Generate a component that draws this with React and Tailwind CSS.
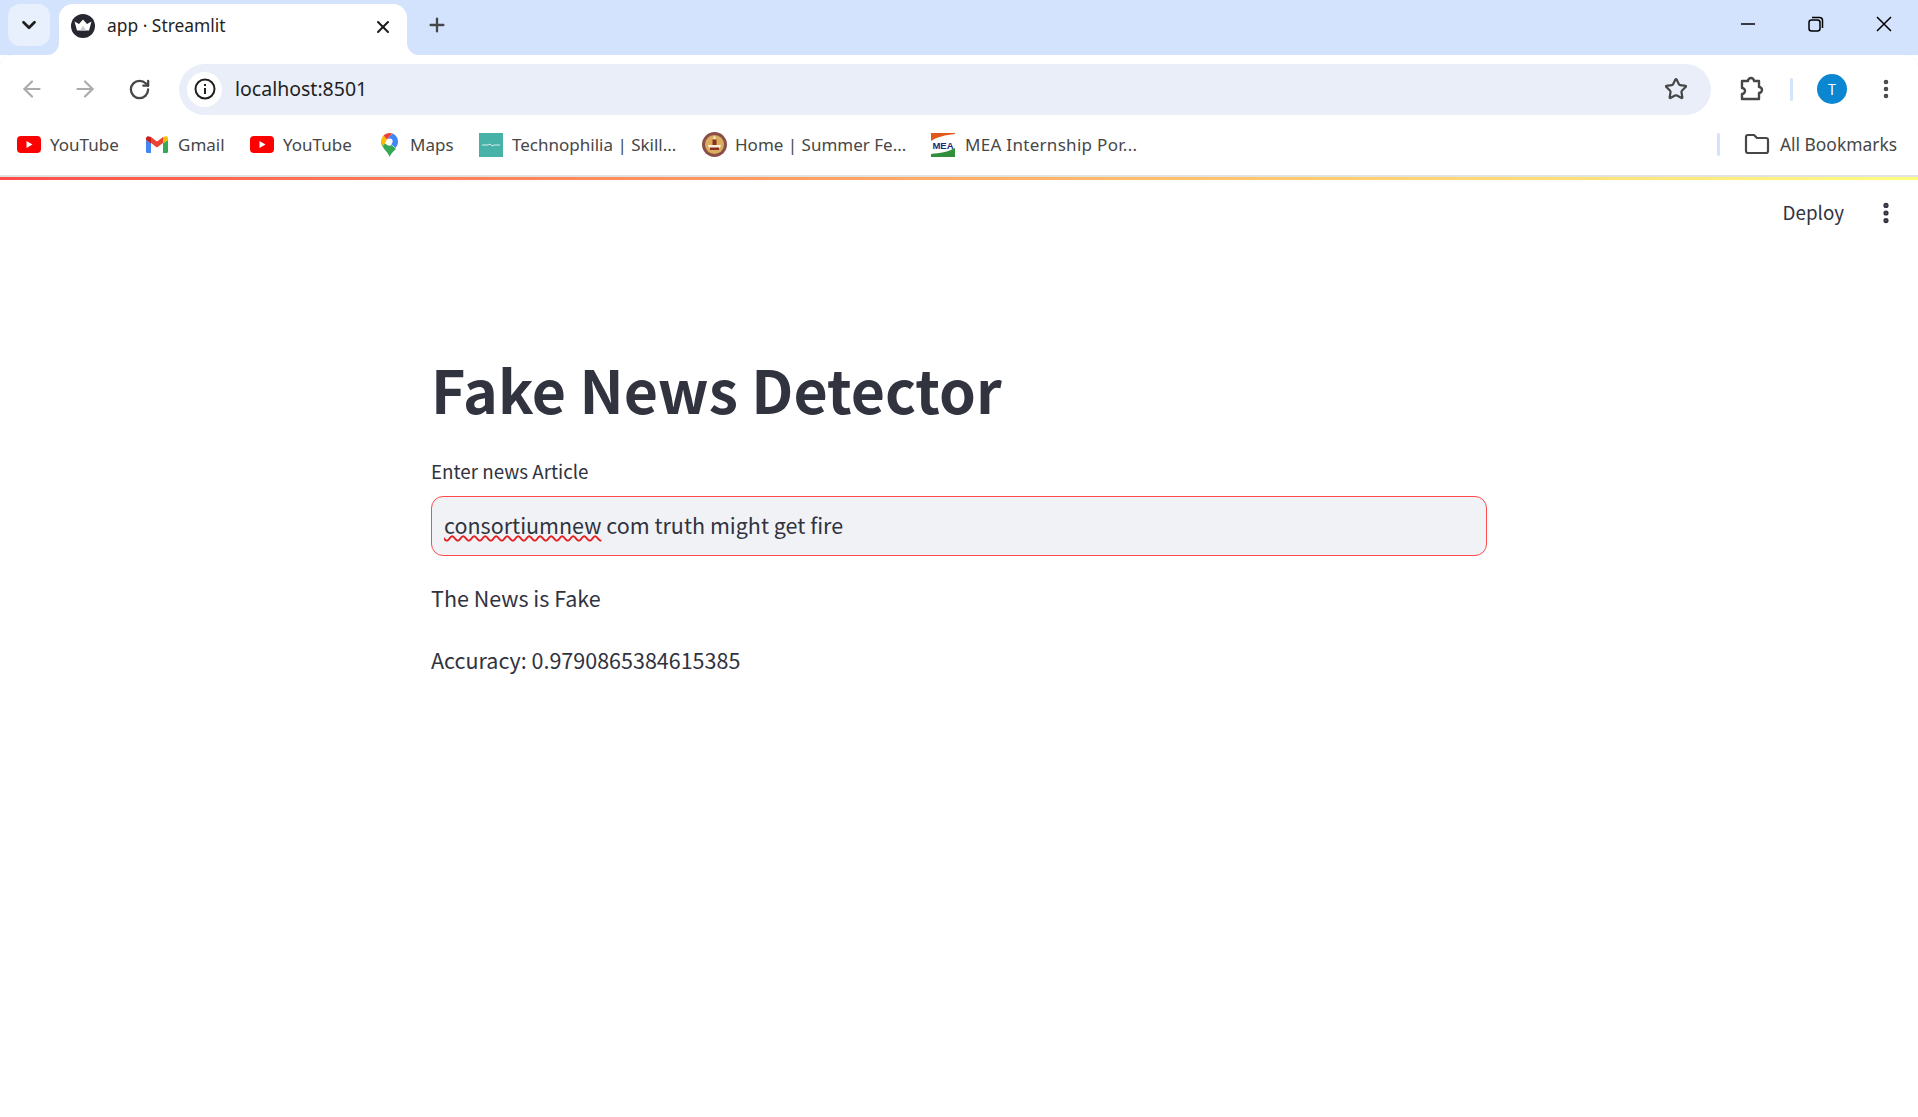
import React from 'react';
import { X, Plus, ChevronDown, ArrowLeft, ArrowRight, RotateCw, Star, EllipsisVertical } from 'lucide-react';

const YouTubeIcon = () => (
  <svg width="24" height="17" viewBox="0 0 24 17" className="shrink-0">
    <rect width="24" height="17" rx="4" fill="#ff0000" />
    <path d="M9.5 5v7l6-3.5z" fill="#fff" />
  </svg>
);

const GmailIcon = () => (
  <svg width="22" height="17" viewBox="0 0 22 17" className="shrink-0">
    <path d="M0 4v11.5A1.5 1.5 0 0 0 1.5 17H5V7z" fill="#4285f4" />
    <path d="M22 4v11.5a1.500 1.500 0 0 1-1.500 1.500H17V7z" fill="#34a853" />
    <path d="M5 7 11 11.500 17 7V1l-6 4.500L5 1z" fill="#ea4335" />
    <path d="M0 4 5 7.500V1L3 .5C1.500-.4 0 .8 0 2.500z" fill="#c5221f" />
    <path d="M22 4 17 7.500V1l2-.5C20.500-.4 22 .8 22 2.500z" fill="#fbbc04" />
  </svg>
);

const MapsIcon = () => (
  <svg width="17" height="24" viewBox="0 0 17 24" className="shrink-0">
    <path d="M8.500 24C7.500 19 0 14.500 0 8.500L5 11c1.500 2 4 2 5.500 1L15 16c-3 3-5.500 5-6.500 8z" fill="#34a853" />
    <path d="M0 8.500C0 6 1 4 2.500 2.500L6 6.500 2.500 13C1 11.500 0 10 0 8.500z" fill="#fbbc04" />
    <path d="M2.500 2.500C4 1 6 0 8.500 0c1 0 2 .2 3 .6L6 6.500z" fill="#ea4335" />
    <path d="M11.500.6C14.500 1.800 17 4.800 17 8.500c0 2.500-1 4.500-2.500 6.500L10 11c1.500-2 1.500-3.500 1-5L6 6.500z" fill="#4285f4" />
    <circle cx="8.500" cy="8.500" r="3" fill="#fff" />
  </svg>
);

const TechnophiliaIcon = () => (
  <svg width="24" height="24" viewBox="0 0 24 24" className="shrink-0">
    <rect width="24" height="24" fill="#48b2a9" />
    <path d="M3 12h6l2-1 2 2 2-1h6" stroke="#d6efec" strokeWidth="1" fill="none" />
  </svg>
);

const SummerIcon = () => (
  <svg width="25" height="25" viewBox="0 0 25 25" className="shrink-0">
    <circle cx="12.500" cy="12.500" r="12.500" fill="#8a4f48" />
    <circle cx="12.500" cy="12.500" r="9.500" fill="#d9ae5f" />
    <path d="M11.500 4.500h2v3h-2z" fill="#f7efd8" />
    <path d="M10.500 7.500h4V13h-4z" fill="#8c2f25" />
    <path d="M6 13h13c-.8 3.500-3.500 5-6.500 5S6.800 16.500 6 13z" fill="#f7efd8" />
    <path d="M8 15.500h9V18H8z" fill="#8c2f25" />
  </svg>
);

const MeaIcon = () => (
  <svg width="24" height="24" viewBox="0 0 24 24" className="shrink-0">
    <path d="M0 0h24v24H0z" fill="#fff" />
    <path d="M0 8V0h24v1C14 2 6 4 0 8z" fill="#e2571a" />
    <path d="M0 24v-3c9-1 17-2 24-6v9z" fill="#2f8f3b" />
    <text x="12" y="15.500" textAnchor="middle" fontSize="9.500" fontWeight="700" fontFamily="'Liberation Sans', sans-serif" fill="#1b2a78">MEA</text>
  </svg>
);

const StreamlitFavicon = () => (
  <svg width="24" height="24" viewBox="0 0 24 24" className="shrink-0">
    <circle cx="12" cy="12" r="12" fill="#262730" />
    <path d="M3.500 7.500l4.500 2.500L12 5.500l4 4.500 4.500-2.500L18 16.500H6z" fill="#fff" />
    <path d="M9 16.500l3-5 3 5z" fill="#c9cad0" />
  </svg>
);

const bookmarks = [
  { label: 'YouTube', icon: <YouTubeIcon />, width: 'w-[129px]', gap: 'gap-[9px]' },
  { label: 'Gmail', icon: <GmailIcon />, width: 'w-[104px]', gap: 'gap-[10px]' },
  { label: 'YouTube', icon: <YouTubeIcon />, width: 'w-[131px]', gap: 'gap-[9px]' },
  { label: 'Maps', icon: <MapsIcon />, width: 'w-[98px]', gap: 'gap-[12px]' },
  { label: 'Technophilia | Skill...', icon: <TechnophiliaIcon />, width: 'w-[223px]', gap: 'gap-[9px]' },
  { label: 'Home | Summer Fe...', icon: <SummerIcon />, width: 'w-[229px]', gap: 'gap-[8px]' },
  { label: 'MEA Internship Por...', icon: <MeaIcon />, width: 'w-[210px]', gap: 'gap-[10px]', tracking: 'tracking-[0.3px]' },
];

function TabStrip() {
  return (
    <div className="flex h-[55px] bg-[#d3e3fd]">
      <div className="ml-2 mt-1 flex h-[42px] w-[42px] items-center justify-center rounded-[12px] bg-[#e8f0fe]">
        <ChevronDown size={22} strokeWidth={3} className="text-[#1f1f1f]" />
      </div>
      <div className="relative ml-[9px] mt-1 flex h-[51px] w-[348px] items-center rounded-t-[14px] bg-white pl-[12px] pr-[14px]">
        <div className="mb-[8px]"><StreamlitFavicon /></div>
        <span className="mb-[8px] ml-[12px] flex-1 font-['Noto_Sans',sans-serif] text-[17.400px] text-[#1f1f1f]">app · Streamlit</span>
        <X size={20} strokeWidth={2.5} className="mb-[6px] text-[#1f1f1f]" />
        {/* concave corners at the foot of the tab */}
        <div className="absolute -left-3 bottom-0 h-3 w-3 bg-white">
          <div className="h-3 w-3 rounded-br-[12px] bg-[#d3e3fd]" />
        </div>
        <div className="absolute -right-3 bottom-0 h-3 w-3 bg-white">
          <div className="h-3 w-3 rounded-bl-[12px] bg-[#d3e3fd]" />
        </div>
      </div>
      <div className="ml-[9px] mt-[4px] flex h-[42px] w-[42px] items-center justify-center">
        <Plus size={22} strokeWidth={2.5} className="text-[#444746]" />
      </div>
      <div className="ml-auto flex h-[48px] items-center">
        <div className="flex w-[68px] justify-center">
          <svg width="16" height="16" viewBox="0 0 16 16"><path d="M1 8h14" stroke="#000" strokeWidth="1.500" /></svg>
        </div>
        <div className="flex w-[68px] justify-center">
          <svg width="16" height="16" viewBox="0 0 16 16" fill="none" stroke="#000" strokeWidth="1.500">
            <rect x="1" y="4" width="11" height="11" rx="2.500" />
            <path d="M4 1.500h7.500A3 3 0 0 1 14.500 4.500V12" />
          </svg>
        </div>
        <div className="flex w-[68px] justify-center">
          <svg width="16" height="16" viewBox="0 0 16 16"><path d="M1 1l14 14M15 1 1 15" stroke="#000" strokeWidth="1.500" /></svg>
        </div>
      </div>
    </div>
  );
}

function Toolbar() {
  return (
    <div className="flex h-[62px] items-center bg-white pb-[2px] pt-[8px]">
      <div className="flex w-[179px] items-center pl-[19px] text-[#ababab]">
        <ArrowLeft size={26} strokeWidth={2} />
        <ArrowRight size={26} strokeWidth={2} className="ml-[27px]" />
        <RotateCw size={23} strokeWidth={2.4} className="ml-[30px] text-[#474747]" />
      </div>
      <div className="flex h-[51px] w-[1532px] items-center rounded-full bg-[#e9eef8] pl-2 pr-[23px]">
        <div className="flex h-[35px] w-[35px] items-center justify-center rounded-full bg-white">
          <svg width="22" height="22" viewBox="0 0 22 22" fill="none" stroke="#1f1f1f" strokeWidth="2">
            <circle cx="11" cy="11" r="9.500" />
            <path d="M11 10v6M11 6v2" />
          </svg>
        </div>
        <span className="ml-[13px] flex-1 font-['Noto_Sans',sans-serif] text-[19.500px] text-[#1f1f1f]">localhost:8501</span>
        <Star size={24} strokeWidth={2.2} className="text-[#474747]" />
      </div>
      <div className="flex flex-1 items-center">
        <svg width="26" height="26" viewBox="0 0 26 26" fill="none" stroke="#474747" strokeWidth="2.400" className="ml-[28px]">
          <path d="M3 5h6a3 3 0 0 1 6 0h5v6a3 3 0 0 1 0 6v6H3v-5a3 3 0 0 0 0-6z" strokeLinejoin="round" />
        </svg>
        <div className="ml-[25px] h-[23px] w-[3px] rounded-full bg-[#d3e3fd]" />
        <div className="ml-[24px] flex h-[30px] w-[30px] items-center justify-center rounded-full bg-[#0b86d1] text-[14px] text-white">T</div>
        <EllipsisVertical size={24} strokeWidth={2.6} className="ml-[27px] text-[#474747]" />
      </div>
    </div>
  );
}

function BookmarksBar() {
  return (
    <div className="flex h-[58px] items-center bg-white pb-[3px] pl-[17px] font-['Noto_Sans',sans-serif] text-[17px] text-[#474747]">
      {bookmarks.map((b, i) => (
        <div key={i} className={`flex items-center ${b.width} ${b.gap}`}>
          {b.icon}
          <span className={`whitespace-nowrap ${b.tracking || ''}`}>{b.label}</span>
        </div>
      ))}
      <div className="ml-auto flex items-center pr-[21px]">
        <div className="mr-[24px] h-[23px] w-[3px] rounded-full bg-[#d3e3fd]" />
        <svg width="26" height="22" viewBox="0 0 26 22" fill="none" stroke="#474747" strokeWidth="2.200" className="mr-[10px]">
          <path d="M2 4a2 2 0 0 1 2-2h6l3 3h9a2 2 0 0 1 2 2v11a2 2 0 0 1-2 2H4a2 2 0 0 1-2-2z" strokeLinejoin="round" />
        </svg>
        <span className="text-[17.400px]">All Bookmarks</span>
      </div>
    </div>
  );
}

export default function App() {
  return (
    <div className="min-h-screen bg-white font-['Noto_Sans_CJK_SC',sans-serif] text-[#31333f]">
      <TabStrip />
      <div className="overflow-hidden rounded-t-[12px] bg-[#d3e3fd]">
        <Toolbar />
        <BookmarksBar />
      </div>
      <div className="h-[2px] bg-[#e1e3e1]" />
      <div className="h-[3px] bg-gradient-to-r from-[#ff4b4b] to-[#fffd80]" />

      <div className="flex h-[60px] items-center justify-end">
        <span className="mt-[4px] text-[18.800px]">Deploy</span>
        <EllipsisVertical size={26} strokeWidth={2.8} className="ml-[29px] mr-[19px] mt-[5px]" />
      </div>

      <main className="mx-auto w-[1056px]">
        <h1 className="mt-[109px] text-[59px] font-bold leading-[80px]">Fake News Detector</h1>
        <label className="mt-[29px] block text-[18.800px] leading-[26px]">Enter news Article</label>
        <div className="mt-[12px] flex h-[60px] items-center rounded-[12px] border border-[#ff4b4b] bg-[#f0f2f6] px-[12px] pb-[2px] text-[21.500px]">
          <span>
            <span className="underline decoration-[#e52020] decoration-wavy decoration-[1.500px] underline-offset-[1px]">consortiumnew</span> com truth might get fire
          </span>
        </div>
        <p className="mt-[25px] text-[21.500px] leading-[34px]">The News is Fake</p>
        <p className="mt-[28px] text-[21.500px] leading-[34px]">Accuracy: 0.9790865384615385</p>
      </main>
    </div>
  );
}
